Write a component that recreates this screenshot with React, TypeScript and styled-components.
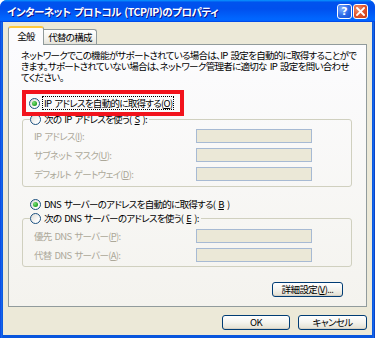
import styled, { createGlobalStyle } from "styled-components";

const GlobalStyle = createGlobalStyle`
  html, body {
    margin: 0;
    padding: 0;
    background: #ffffff;
  }
  body {
    font-family: "Noto Sans CJK JP", "Noto Sans", sans-serif;
    font-size: 9.5px;
    letter-spacing: -0.7px;
    word-spacing: 1.5px;
    font-feature-settings: "palt";
    color: #000;
  }
`;

const Window = styled.div`
  width: 375px;
  height: 338px;
  display: flex;
  flex-direction: column;
  border-radius: 7px 7px 0 0;
  overflow: hidden;
  background: linear-gradient(90deg, #0831d9 0, #166aee 1px, #0855dd 3px, #0855dd 372px, #166aee 374px, #001ea0 375px);
  box-sizing: border-box;
`;

const TitleBar = styled.div`
  height: 22px;
  flex-shrink: 0;
  display: flex;
  align-items: center;
  padding: 0 7px 0 7px;
  box-sizing: border-box;
  background: linear-gradient(
    180deg,
    #0997ff 0%,
    #0053ee 10%,
    #0050ee 40%,
    #0066ff 85%,
    #0066ff 92%,
    #005bff 95%,
    #003dd7 100%
  );
  color: #fff;
  font-weight: bold;
  font-size: 10.5px;
  letter-spacing: -0.5px;
  text-shadow: 1px 1px 0 #0f1089;
  white-space: nowrap;
`;

const TitleButtons = styled.div`
  margin-left: auto;
  display: flex;
  gap: 1px;
`;

const CaptionButton = styled.div<{ $close?: boolean }>`
  width: 15px;
  height: 15px;
  box-sizing: border-box;
  border: 1px solid #fff;
  border-radius: 3px;
  display: flex;
  align-items: center;
  justify-content: center;
  background: ${(p) =>
    p.$close
      ? "radial-gradient(circle at 30% 30%, #f0906e 0%, #e2542b 50%, #c23a12 100%)"
      : "radial-gradient(circle at 30% 30%, #7fb0ff 0%, #2a68e8 55%, #1a4fcf 100%)"};
  color: #fff;
  font-family: "DejaVu Sans", sans-serif;
  font-size: 11px;
  font-weight: bold;
  letter-spacing: 0;
  text-shadow: none;
  line-height: 1;
`;

const Body = styled.div`
  flex: 1;
  margin: 0 3px 3px 3px;
  background: #ece9d8;
  padding: 4px 5px 5px 5px;
  display: flex;
  flex-direction: column;
  box-sizing: border-box;
`;

const Tabs = styled.div`
  height: 18px;
  display: flex;
  align-items: flex-end;
  flex-shrink: 0;
`;

const SelectedTab = styled.div`
  position: relative;
  z-index: 1;
  width: 36px;
  height: 19px;
  margin-bottom: -1px;
  box-sizing: border-box;
  border: 1px solid #919b9c;
  border-top: 2px solid #ffc83c;
  border-bottom: none;
  border-radius: 3px 3px 0 0;
  background: #fcfcfe;
  display: flex;
  align-items: center;
  justify-content: center;
  padding-bottom: 1px;
`;

const Tab = styled.div`
  width: 53px;
  height: 15px;
  box-sizing: border-box;
  border: 1px solid #919b9c;
  border-left: none;
  border-bottom: none;
  border-radius: 0 3px 0 0;
  background: linear-gradient(180deg, #ffffff 0%, #f3f3ef 60%, #e4e2d9 100%);
  display: flex;
  align-items: center;
  justify-content: center;
`;

const Panel = styled.div`
  height: 263px;
  flex-shrink: 0;
  box-sizing: border-box;
  border: 1px solid #919b9c;
  background: linear-gradient(180deg, #fcfcfe 0%, #f4f3ee 100%);
  padding: 5px 0 0 12px;
  display: flex;
  flex-direction: column;
`;

const Paragraph = styled.p`
  margin: 0;
  line-height: 11px;
  white-space: nowrap;

  & span {
    display: block;
  }
`;

const Highlight = styled.div`
  position: relative;
  z-index: 2;
  align-self: flex-start;
  min-width: 158px;
  height: 26px;
  margin: 7px 0 -4px 1px;
  box-sizing: border-box;
  border: 4px solid #f2131c;
  display: flex;
  align-items: center;
  padding: 0 6px 0 3px;
  gap: 2px;
`;

const Focus = styled.span`
  display: flex;
  align-items: center;
  height: 14px;
  box-sizing: border-box;
  padding: 0 1px;
  border: 1px dotted #000;
  white-space: pre;
`;

const Radio = styled.span<{ $checked?: boolean }>`
  width: 11px;
  height: 11px;
  box-sizing: border-box;
  border-radius: 50%;
  border: 1px solid #1c5180;
  background: linear-gradient(135deg, #dcdcd7 0%, #ffffff 80%);
  display: flex;
  align-items: center;
  justify-content: center;
  flex-shrink: 0;

  &::after {
    content: "";
    display: ${(p) => (p.$checked ? "block" : "none")};
    width: 5px;
    height: 5px;
    border-radius: 50%;
    background: radial-gradient(circle at 35% 35%, #7ce07a 0%, #21a121 70%);
  }
`;

const RadioRow = styled.div<{ $indent?: number; $top?: number }>`
  display: flex;
  align-items: center;
  gap: 3px;
  height: 12px;
  margin-top: ${(p) => p.$top ?? 0}px;
  margin-left: ${(p) => p.$indent ?? 0}px;
  white-space: pre;
`;

const Group = styled.fieldset<{ $top: number; $pad: number; $bottom: number }>`
  margin: ${(p) => p.$top}px 14px 0 1px;
  padding: ${(p) => p.$pad}px 0 ${(p) => p.$bottom}px 7px;
  border: 1px solid #d0d0bf;
  border-radius: 3px;
  min-width: 0;
  display: flex;
  flex-direction: column;
  gap: 5px;
`;

const Legend = styled.legend`
  padding: 0 2px 0 0;
  height: 12px;
  display: flex;
  align-items: center;
  gap: 3px;
  white-space: pre;
`;

const FieldRow = styled.div`
  display: flex;
  align-items: center;
  height: 14px;
  margin-left: 4px;
`;

const FieldLabel = styled.span`
  width: 162px;
  color: #aca899;
  white-space: pre;
`;

const AddressBox = styled.input`
  width: 116px;
  height: 14px;
  box-sizing: border-box;
  margin: 0;
  padding: 0;
  border: 1px solid #a7bad3;
  background: #ebe8d7;
`;

const Button = styled.button<{ $width: number }>`
  width: ${(p) => p.$width}px;
  height: 15px;
  box-sizing: border-box;
  margin: 0;
  padding: 0;
  border: 1px solid #003c74;
  border-radius: 3px;
  background: linear-gradient(180deg, #ffffff 0%, #f4f3ee 50%, #e6e3d6 90%, #d6d0c5 100%);
  box-shadow: inset 0 -1px 0 #d6d0c5;
  font-family: inherit;
  font-size: 9.5px;
  letter-spacing: -0.6px;
  font-feature-settings: "palt";
  color: #000;
  line-height: 1;
  display: flex;
  align-items: center;
  justify-content: center;
  white-space: nowrap;
`;

const AdvancedButton = styled(Button)`
  align-self: flex-end;
  margin: 15px 23px 0 0;
`;

const Footer = styled.div`
  display: flex;
  justify-content: flex-end;
  gap: 8px;
  margin-top: 8px;
`;

export default function App() {
  return (
    <>
      <GlobalStyle />
      <Window>
        <TitleBar>
          インターネット プロトコル (TCP/IP)のプロパティ
          <TitleButtons>
            <CaptionButton>?</CaptionButton>
            <CaptionButton $close>
              <svg width="9" height="9" viewBox="0 0 9 9">
                <path d="M1 1 L8 8 M8 1 L1 8" stroke="#fff" strokeWidth="1.8" strokeLinecap="square" />
              </svg>
            </CaptionButton>
          </TitleButtons>
        </TitleBar>
        <Body>
          <Tabs>
            <SelectedTab>全般</SelectedTab>
            <Tab>代替の構成</Tab>
          </Tabs>
          <Panel>
            <Paragraph>
              <span>ネットワークでこの機能がサポートされている場合は、IP 設定を自動的に取得することがで</span>
              <span>きます。サポートされていない場合は、ネットワーク管理者に適切な IP 設定を問い合わせ</span>
              <span>てください。</span>
            </Paragraph>
            <Highlight>
              <Radio $checked />
              <Focus>
                IP アドレスを自動的に取得する(<u>O</u>)
              </Focus>
            </Highlight>
            <Group $top={1} $pad={4} $bottom={5}>
              <Legend>
                <Radio />
                次の IP アドレスを使う(<u>S</u>):
              </Legend>
              <FieldRow>
                <FieldLabel>
                  IP アドレス(<u>I</u>):
                </FieldLabel>
                <AddressBox disabled />
              </FieldRow>
              <FieldRow>
                <FieldLabel>
                  サブネット マスク(<u>U</u>):
                </FieldLabel>
                <AddressBox disabled />
              </FieldRow>
              <FieldRow>
                <FieldLabel>
                  デフォルト ゲートウェイ(<u>D</u>):
                </FieldLabel>
                <AddressBox disabled />
              </FieldRow>
            </Group>
            <RadioRow $indent={9} $top={11}>
              <Radio $checked />
              DNS サーバーのアドレスを自動的に取得する(<u>B</u>)
            </RadioRow>
            <Group $top={2} $pad={5} $bottom={4}>
              <Legend>
                <Radio />
                次の DNS サーバーのアドレスを使う(<u>E</u>):
              </Legend>
              <FieldRow>
                <FieldLabel>
                  優先 DNS サーバー(<u>P</u>):
                </FieldLabel>
                <AddressBox disabled />
              </FieldRow>
              <FieldRow>
                <FieldLabel>
                  代替 DNS サーバー(<u>A</u>):
                </FieldLabel>
                <AddressBox disabled />
              </FieldRow>
            </Group>
            <AdvancedButton $width={71}>
              詳細設定(<u>V</u>)...
            </AdvancedButton>
          </Panel>
          <Footer>
            <Button $width={68}>OK</Button>
            <Button $width={69}>キャンセル</Button>
          </Footer>
        </Body>
      </Window>
    </>
  );
}
